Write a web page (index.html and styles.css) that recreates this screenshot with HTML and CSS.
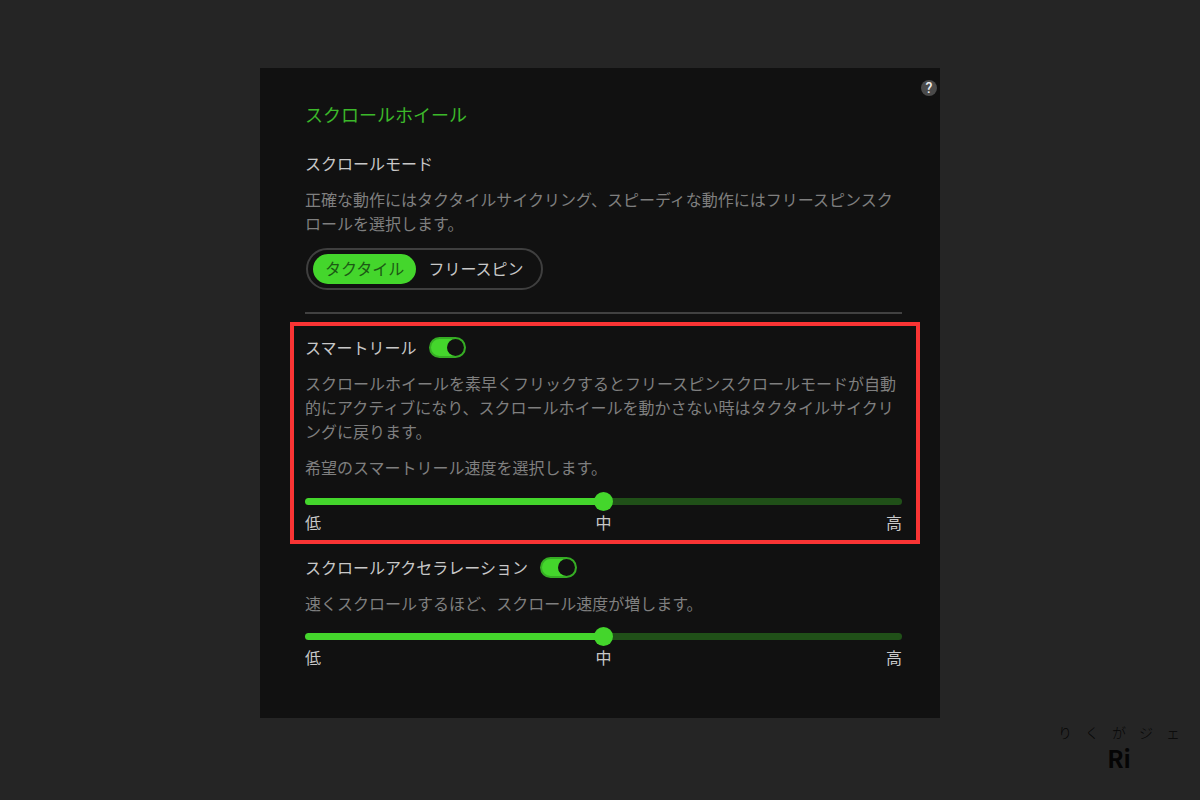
FILE: index.html
```html
<!DOCTYPE html>
<html lang="ja">
<head>
<meta charset="utf-8">
<meta name="viewport" content="width=device-width, initial-scale=1">
<title>スクロールホイール</title>
<link rel="stylesheet" href="styles.css">
</head>
<body>
<main class="panel">
  <button class="help" type="button" aria-label="ヘルプ">?</button>
  <section class="group">
    <h1 class="panel-title">スクロールホイール</h1>
    <h2 class="group-title">スクロールモード</h2>
    <p class="text">正確な動作にはタクタイルサイクリング、スピーディな動作にはフリースピンスクロールを選択します。</p>
    <div class="segmented">
      <button class="segment segment-active" type="button" aria-pressed="true">タクタイル</button>
      <button class="segment" type="button" aria-pressed="false">フリースピン</button>
    </div>
    <hr class="divider">
  </section>
  <section class="group group-highlight">
    <div class="group-head">
      <label class="group-title" for="smart-reel">スマートリール</label>
      <input class="toggle" id="smart-reel" type="checkbox" role="switch" checked>
    </div>
    <p class="text">スクロールホイールを素早くフリックするとフリースピンスクロールモードが自動的にアクティブになり、スクロールホイールを動かさない時はタクタイルサイクリングに戻ります。</p>
    <label class="text" for="reel-speed">希望のスマートリール速度を選択します。</label>
    <div class="slider">
      <input class="range" id="reel-speed" type="range" min="0" max="2" value="1">
      <div class="scale"><span>低</span><span>中</span><span>高</span></div>
    </div>
  </section>
  <section class="group group-last">
    <div class="group-head">
      <label class="group-title" for="accel">スクロールアクセラレーション</label>
      <input class="toggle" id="accel" type="checkbox" role="switch" checked>
    </div>
    <label class="text" for="accel-speed">速くスクロールするほど、スクロール速度が増します。</label>
    <div class="slider">
      <input class="range" id="accel-speed" type="range" min="0" max="2" value="1">
      <div class="scale"><span>低</span><span>中</span><span>高</span></div>
    </div>
  </section>
</main>
<footer class="brand">
  <div class="brand-name"><span>り</span><span>く</span><span>が</span><span>ジ</span><span>ェ</span></div>
  <div class="brand-mark">Ri</div>
</footer>
</body>
</html>
```
FILE: styles.css
```css
* {
  box-sizing: border-box;
}

body {
  margin: 0;
  min-height: 100vh;
  padding: 68px 20px 28px;
  display: flex;
  flex-direction: column;
  align-items: center;
  background: #252525;
  color: #c8c8c8;
  font-family: "Noto Sans CJK JP", sans-serif;
  font-size: 16px;
  line-height: 24px;
}

h1, h2, p {
  margin: 0;
}

button {
  font: inherit;
  border: 0;
  padding: 0;
}

.panel {
  position: relative;
  width: 100%;
  max-width: 680px;
  padding: 31px 20px 49px 30px;
  background: #111;
}

.help {
  position: absolute;
  top: 12px;
  right: 3px;
  width: 16px;
  height: 16px;
  border-radius: 50%;
  background: #4a4a4a;
  color: #eee;
  font-family: Roboto, sans-serif;
  font-size: 14px;
  font-weight: 500;
  line-height: 16px;
  text-align: center;
}

.group {
  display: flex;
  flex-direction: column;
  gap: 12px;
  padding: 0 18px 0 15px;
}

.group-highlight {
  margin-top: 8px;
  padding: 9px 14px 6px 11px;
  border: 4px solid #f93434;
}

.group-last {
  padding-top: 11px;
}

.panel-title {
  margin-bottom: 10px;
  color: #3cb82a;
  font-size: 18px;
  font-weight: 400;
  line-height: 30px;
}

.group-title {
  font-size: 16px;
  font-weight: 400;
}

.group-head {
  display: flex;
  align-items: center;
  gap: 12px;
}

.text {
  color: #7f7f7f;
}

.segmented {
  display: flex;
  align-self: flex-start;
  padding: 4px 5px;
  margin: 1px 0 0 1px;
  border: 2px solid #3f3f3f;
  border-radius: 21px;
}

.segment {
  height: 30px;
  padding: 0 12px 2px;
  border-radius: 15px;
  background: transparent;
  color: #c8c8c8;
  line-height: 28px;
}

.segment-active {
  background: #44d62c;
  color: #1c5a14;
}

.divider {
  width: 100%;
  height: 2px;
  margin: 10px 0 0;
  border: 0;
  background: #414141;
}

.toggle {
  appearance: none;
  width: 37px;
  height: 21px;
  margin: 0;
  border: 2px solid #36ad24;
  border-radius: 11px;
  background: #44d62c;
}

.toggle::before {
  content: "";
  display: block;
  width: 17px;
  height: 17px;
  border-radius: 50%;
  background: #111;
}

.toggle:checked::before {
  margin-left: auto;
}

.slider {
  display: flex;
  flex-direction: column;
}

.group-highlight .slider {
  margin-top: 1px;
}

.range {
  appearance: none;
  width: 100%;
  height: 18px;
  margin: 0;
  background: transparent;
}

.range::-webkit-slider-runnable-track {
  height: 7px;
  border-radius: 4px;
  background: linear-gradient(to right, #44d62c 50%, #205018 50%);
}

.range::-webkit-slider-thumb {
  appearance: none;
  width: 19px;
  height: 19px;
  margin-top: -6px;
  border-radius: 50%;
  background: #44d62c;
}

.scale {
  display: flex;
  justify-content: space-between;
}

.brand {
  display: flex;
  flex-direction: column;
  align-items: center;
  align-self: flex-end;
  width: 122px;
  margin-top: auto;
  color: #050505;
}

.brand-name {
  display: flex;
  justify-content: space-between;
  width: 100%;
  font-size: 14px;
  font-weight: 300;
}

.brand-mark {
  font-size: 24px;
  font-weight: 700;
  line-height: 28px;
}
```
